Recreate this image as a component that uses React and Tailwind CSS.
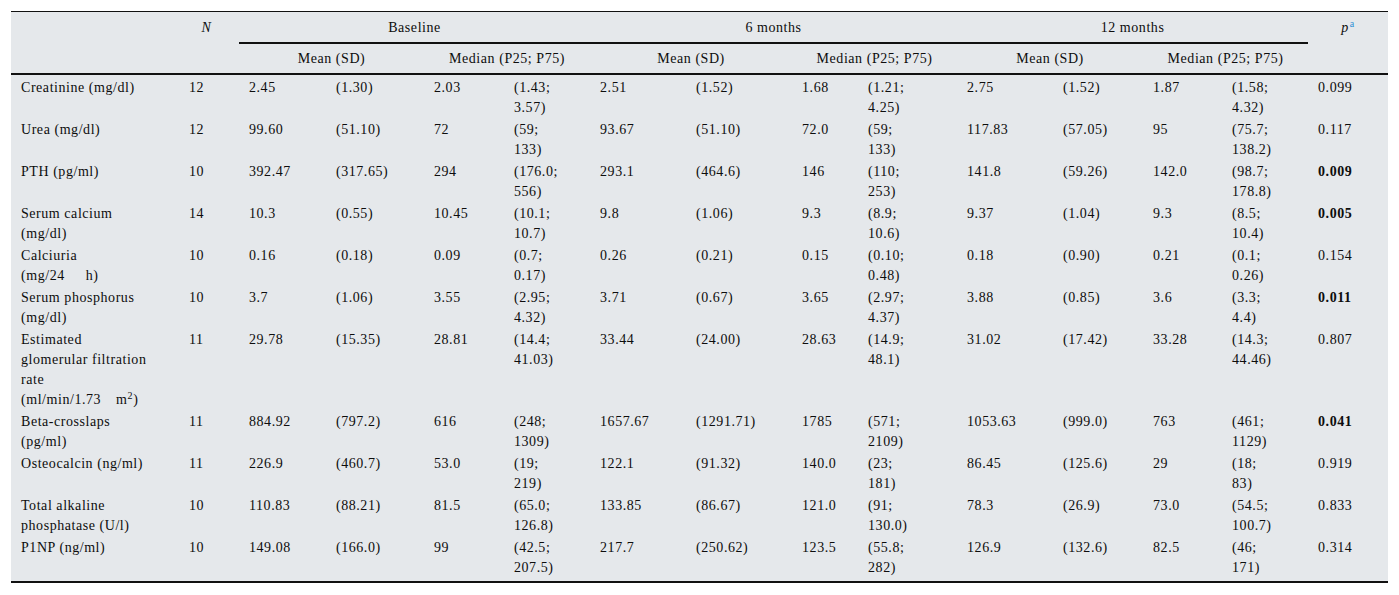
import React from 'react';

// column widths, in px, left to right
const cols = [168, 60, 87, 98, 80, 86, 96, 106, 66, 99, 96, 90, 79, 86, 80];

// one entry per row: label lines, N, then 12 values, then p (bold flag)
const rows = [
  [['Creatinine (mg/dl)'], '12', '2.45', '(1.30)', '2.03', ['(1.43;', '3.57)'], '2.51', '(1.52)', '1.68', ['(1.21;', '4.25)'], '2.75', '(1.52)', '1.87', ['(1.58;', '4.32)'], '0.099', false],
  [['Urea (mg/dl)'], '12', '99.60', '(51.10)', '72', ['(59;', '133)'], '93.67', '(51.10)', '72.0', ['(59;', '133)'], '117.83', '(57.05)', '95', ['(75.7;', '138.2)'], '0.117', false],
  [['PTH (pg/ml)'], '10', '392.47', '(317.65)', '294', ['(176.0;', '556)'], '293.1', '(464.6)', '146', ['(110;', '253)'], '141.8', '(59.26)', '142.0', ['(98.7;', '178.8)'], '0.009', true],
  [['Serum calcium', '(mg/dl)'], '14', '10.3', '(0.55)', '10.45', ['(10.1;', '10.7)'], '9.8', '(1.06)', '9.3', ['(8.9;', '10.6)'], '9.37', '(1.04)', '9.3', ['(8.5;', '10.4)'], '0.005', true],
  [['Calciuria', 'calc'], '10', '0.16', '(0.18)', '0.09', ['(0.7;', '0.17)'], '0.26', '(0.21)', '0.15', ['(0.10;', '0.48)'], '0.18', '(0.90)', '0.21', ['(0.1;', '0.26)'], '0.154', false],
  [['Serum phosphorus', '(mg/dl)'], '10', '3.7', '(1.06)', '3.55', ['(2.95;', '4.32)'], '3.71', '(0.67)', '3.65', ['(2.97;', '4.37)'], '3.88', '(0.85)', '3.6', ['(3.3;', '4.4)'], '0.011', true],
  [['Estimated', 'glomerular filtration', 'rate', 'gfr'], '11', '29.78', '(15.35)', '28.81', ['(14.4;', '41.03)'], '33.44', '(24.00)', '28.63', ['(14.9;', '48.1)'], '31.02', '(17.42)', '33.28', ['(14.3;', '44.46)'], '0.807', false],
  [['Beta-crosslaps', '(pg/ml)'], '11', '884.92', '(797.2)', '616', ['(248;', '1309)'], '1657.67', '(1291.71)', '1785', ['(571;', '2109)'], '1053.63', '(999.0)', '763', ['(461;', '1129)'], '0.041', true],
  [['Osteocalcin (ng/ml)'], '11', '226.9', '(460.7)', '53.0', ['(19;', '219)'], '122.1', '(91.32)', '140.0', ['(23;', '181)'], '86.45', '(125.6)', '29', ['(18;', '83)'], '0.919', false],
  [['Total alkaline', 'phosphatase (U/l)'], '10', '110.83', '(88.21)', '81.5', ['(65.0;', '126.8)'], '133.85', '(86.67)', '121.0', ['(91;', '130.0)'], '78.3', '(26.9)', '73.0', ['(54.5;', '100.7)'], '0.833', false],
  [['P1NP (ng/ml)'], '10', '149.08', '(166.0)', '99', ['(42.5;', '207.5)'], '217.7', '(250.62)', '123.5', ['(55.8;', '282)'], '126.9', '(132.6)', '82.5', ['(46;', '171)'], '0.314', false],
];

const LabelLine = ({ text }) => {
  if (text === 'calc') {
    return (
      <span>(mg/24<span className="inline-block w-[21px]" />h)</span>
    );
  }
  if (text === 'gfr') {
    return (
      <span>(ml/min/1.73<span className="inline-block w-[15px]" />m<sup className="text-[10px]">2</sup>)</span>
    );
  }
  return <span>{text}</span>;
};

const Lines = ({ value }) => {
  if (!Array.isArray(value)) return value;
  return value.map((v, i) => (
    <React.Fragment key={i}>
      {i > 0 && <br />}
      <LabelLine text={v} />
    </React.Fragment>
  ));
};

export default function App() {
  return (
    <div className="min-h-screen bg-white pl-[11px] pt-[11px]">
      <table
        className="table-fixed border-collapse bg-[#e5e8eb] text-[#0d0d0d] text-[14px] leading-[20px] tracking-[0.55px] whitespace-nowrap w-[1377px]"
        style={{ fontFamily: '"Liberation Serif", "Times New Roman", serif' }}
      >
        <colgroup>
          {cols.map((w, i) => (
            <col key={i} style={{ width: w }} />
          ))}
        </colgroup>
        <thead>
          <tr className="border-t border-[#111]">
            <th rowSpan={2} className="border-b-2 border-[#111] font-normal" />
            <th rowSpan={2} className="border-b-2 border-[#111] font-normal italic align-top pt-[6px] pr-[5px] text-center">N</th>
            <th colSpan={4} className="border-b-2 border-[#111] font-normal text-center pt-[6px] pb-[4px]">Baseline</th>
            <th colSpan={4} className="border-b-2 border-[#111] font-normal text-center pt-[6px] pb-[4px]">6 months</th>
            <th colSpan={4} className="border-b-2 border-[#111] font-normal text-center pt-[6px] pb-[4px]">12 months</th>
            <th rowSpan={2} className="border-b-2 border-[#111] font-normal align-top pt-[6px] text-center">
              <span className="italic">p</span>
              <sup className="text-[10px] text-[#2f8fd6] ml-px">a</sup>
            </th>
          </tr>
          <tr>
            <th colSpan={2} className="border-b-2 border-[#111] font-normal text-center pt-[5px] pb-[4px]">Mean (SD)</th>
            <th colSpan={2} className="border-b-2 border-[#111] font-normal text-center pt-[5px] pb-[4px]">Median (P25; P75)</th>
            <th colSpan={2} className="border-b-2 border-[#111] font-normal text-center pt-[5px] pb-[4px]">Mean (SD)</th>
            <th colSpan={2} className="border-b-2 border-[#111] font-normal text-center pt-[5px] pb-[4px]">Median (P25; P75)</th>
            <th colSpan={2} className="border-b-2 border-[#111] font-normal text-center pt-[5px] pb-[4px]">Mean (SD)</th>
            <th colSpan={2} className="border-b-2 border-[#111] font-normal text-center pt-[5px] pb-[4px]">Median (P25; P75)</th>
          </tr>
        </thead>
        <tbody className="border-b-2 border-[#111]">
          {rows.map((r, ri) => {
            const last = ri === rows.length - 1;
            const cells = r.slice(0, 15);
            const bold = r[15];
            return (
              <tr key={ri}>
                {cells.map((c, ci) => (
                  <td
                    key={ci}
                    className={`align-top pl-[10px] pt-[3px] ${last ? 'pb-[4px]' : 'pb-0'} ${ci === 14 && bold ? 'font-bold' : ''}`}
                  >
                    <div className="-mb-px">
                      {ci === 0 || Array.isArray(c) ? (
                        <>
                          <Lines value={c} />
                          {(!Array.isArray(c) || c.length < 2) && (
                            <>
                              <br />
                              <span>&nbsp;</span>
                            </>
                          )}
                        </>
                      ) : (
                        c
                      )}
                    </div>
                  </td>
                ))}
              </tr>
            );
          })}
        </tbody>
      </table>
    </div>
  );
}
